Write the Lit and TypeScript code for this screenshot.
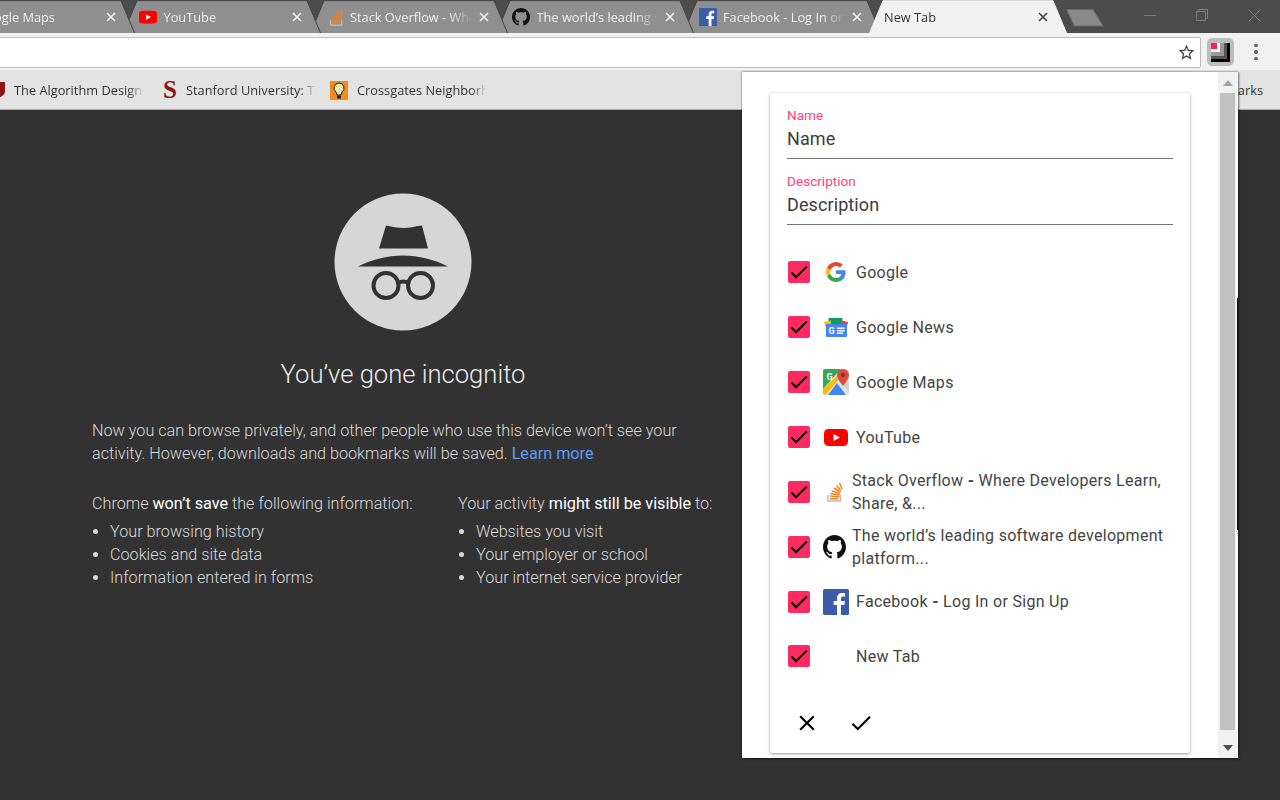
import { LitElement, html, css, svg } from "lit";
import { customElement } from "lit/decorators.js";

const icons: Record<string, any> = {
  google: svg`<svg viewBox="0 0 24 24" width="24" height="24"><path fill="#4285F4" d="M21.600 12.200c0-.7-.1-1.400-.2-2H12v3.900h5.400a4.600 4.600 0 0 1-2 3v2.500h3.200c1.900-1.700 3-4.300 3-7.400z"/><path fill="#34A853" d="M12 22c2.700 0 5-.9 6.600-2.400l-3.200-2.500c-.9.600-2 1-3.400 1-2.600 0-4.800-1.800-5.600-4.100H3.100v2.600A10 10 0 0 0 12 22z"/><path fill="#FBBC05" d="M6.400 14c-.2-.6-.3-1.300-.3-2s.1-1.400.3-2V7.400H3.100a10 10 0 0 0 0 9.200z"/><path fill="#EA4335" d="M12 6c1.500 0 2.800.5 3.800 1.500l2.900-2.900A10 10 0 0 0 3.100 7.400L6.400 10C7.200 7.700 9.400 6 12 6z"/></svg>`,
  news: svg`<svg viewBox="0 0 24 19" width="24" height="19"><path fill="#0c9d58" d="M4.500 0h14v7h-14z"/><path fill="#ea4335" d="M17 2.500L24 4l-1.500 7L17 8z"/><path fill="#fbbc05" d="M7 2.500L0 4l2 7 5-3z"/><rect x="2" y="6" width="21" height="13" rx="1" fill="#4285f4"/><text x="4.500" y="16" font-family="Roboto, sans-serif" font-size="9" font-weight="700" fill="#fff">G</text><path fill="#fff" d="M13 9.500h7.500v1.400H13zM13 12h7.500v1.400H13zM13 14.500h6v1.400h-6z"/></svg>`,
  maps: svg`<svg viewBox="0 0 26 26" width="26" height="26"><rect width="26" height="26" rx="2" fill="#e4e4e4"/><path fill="#35a85a" d="M0 2a2 2 0 0 1 2-2h16L0 20z"/><path fill="#fbbc05" d="M0 20L14.500 6.500l2 3L2.500 26H2a2 2 0 0 1-2-2z"/><path fill="#4285f4" d="M5 26l9-12 9 12z"/><path fill="#cfcfcf" d="M16 11l10 12v-9l-8-6z"/><path fill="#db4a3c" d="M20 0a6 6 0 0 0-6 6c0 4 6 11 6 11s6-7 6-11a6 6 0 0 0-6-6z"/><circle cx="20" cy="6" r="2.200" fill="#8c2f26"/><text x="3.500" y="10.500" font-family="Roboto, sans-serif" font-size="9" font-weight="700" fill="#fff">G</text></svg>`,
  youtube: svg`<svg viewBox="0 0 24 17" width="24" height="17"><rect width="24" height="17" rx="4.500" fill="#f00"/><path fill="#fff" d="M9.500 5l6.500 3.500-6.500 3.500z"/></svg>`,
  stack: svg`<svg viewBox="-4 0 20 20" width="20" height="20"><path fill="none" stroke="#bcbbbb" stroke-width="1.400" d="M1 13v6h12.500v-6"/><g stroke="#f48024" stroke-width="1.500"><path d="M3 16.700h8.500"/><path d="M3 14l9.500.8"/><path d="M3.500 11.500l9 1.500"/><path d="M5 9l8 2.500"/><path d="M7 6l6.500 4"/><path d="M9.500 3.500l4.500 5"/><path d="M12.500 1l2.500 6"/></g></svg>`,
  github: svg`<svg viewBox="0 0 16 16" width="23" height="24" preserveAspectRatio="none"><path fill="#111" d="M8 0C3.580 0 0 3.580 0 8c0 3.540 2.290 6.530 5.470 7.590.4.070.55-.17.55-.38 0-.19-.01-.82-.01-1.490-2.010.37-2.530-.49-2.690-.94-.09-.23-.48-.94-.82-1.130-.28-.15-.68-.52-.01-.53.630-.01 1.080.580 1.230.820.720 1.210 1.870.870 2.330.660.070-.520.280-.870.510-1.070-1.780-.200-3.640-.890-3.640-3.950 0-.870.310-1.590.820-2.150-.080-.200-.360-1.020.080-2.120 0 0 .670-.210 2.200.820.640-.180 1.320-.270 2-.270s1.360.090 2 .270c1.530-1.040 2.200-.820 2.200-.820.440 1.100.160 1.920.080 2.120.510.560.820 1.270.820 2.150 0 3.070-1.870 3.750-3.650 3.950.290.250.540.730.540 1.480 0 1.070-.010 1.930-.010 2.200 0 .210.150.460.550.380A8.010 8.010 0 0 0 16 8c0-4.420-3.580-8-8-8z"/></svg>`,
  facebook: svg`<svg viewBox="0 0 26 26" width="26" height="26"><rect width="26" height="26" rx="1.500" fill="#3b5ca8"/><path fill="#fff" d="M18 26V16h3.400l.5-4H18V9.500c0-1.100.4-1.900 2-1.900h2V4.200c-.4 0-1.600-.2-3-.2-3 0-5 1.800-5 5.100V12h-3.400v4H14v10z"/></svg>`,
};

const tabs = [
  { title: "Google Maps", icon: "maps", active: false },
  { title: "YouTube", icon: "youtube", active: false },
  { title: "Stack Overflow - Where Developers", icon: "stack", active: false },
  { title: "The world’s leading software", icon: "github", active: false },
  { title: "Facebook - Log In or Sign Up", icon: "facebook", active: false },
  { title: "New Tab", icon: "", active: true },
];

const items = [
  { title: "Google", icon: "google", wrap: false },
  { title: "Google News", icon: "news", wrap: false },
  { title: "Google Maps", icon: "maps", wrap: false },
  { title: "YouTube", icon: "youtube", wrap: false },
  { title: "Stack Overflow - Where Developers Learn, Share, &...", icon: "stack", wrap: true },
  { title: "The world’s leading software development platform...", icon: "github", wrap: true },
  { title: "Facebook - Log In or Sign Up", icon: "facebook", wrap: false },
  { title: "New Tab", icon: "", wrap: false },
];

@customElement("app-root")
export class AppRoot extends LitElement {
  static styles = css`
    :host { display: block; width: 1280px; height: 800px; overflow: hidden; position: relative; background: #323232; font-family: Roboto, sans-serif; }
    .strip { height: 33px; background: #4c4c4c; display: flex; align-items: stretch; overflow: hidden; position: relative; }
    .tabs { display: flex; margin-left: -63.500px; flex: none; }
    .tab { position: relative; flex: none; width: 198px; height: 33px; margin-right: -11.500px; display: flex; align-items: center; box-sizing: border-box; padding: 0 18px 0 16px; font-family: "Open Sans", sans-serif; font-size: 12.800px; color: #f0f0f0; }
    .tab.active { color: #333; padding-left: 15px; }
    .tab-bg { position: absolute; inset: 0; width: 198px; height: 33px; }
    .tab-ico { position: relative; width: 18px; height: 18px; margin-right: 6.500px; display: flex; align-items: center; justify-content: center; flex: none; }
    .tab-ico svg { width: 18px; height: 18px; display: block; }
    .tab-title { position: relative; flex: 1; white-space: nowrap; overflow: hidden; -webkit-mask-image: linear-gradient(to left, transparent 0, #000 22px); mask-image: linear-gradient(to left, transparent 0, #000 22px); }
    .tab-x { position: relative; width: 12px; height: 12px; margin-left: 6px; flex: none; color: #f3f3f3; }
    .tab.active .tab-x { color: #444; }
    .tab-x svg { display: block; }
    .newtab { flex: none; margin: 9px 0 0 10.500px; width: 38px; height: 18px; position: relative; }
    .win { margin-left: auto; display: flex; align-items: center; height: 30px; color: #7c7c7c; }
    .win span { display: flex; justify-content: center; }
    .win .min { width: 51px; }
    .win .max { width: 53px; }
    .win .cls { width: 52px; }
    .toolbar { height: 37px; background: #f2f2f2; display: flex; align-items: center; box-sizing: border-box; padding-top: 1px; }
    .omni { height: 31px; width: 1201px; flex: none; background: #fff; border: 1px solid #bdbdbd; border-left: none; box-sizing: border-box; display: flex; align-items: center; justify-content: flex-end; padding-right: 4px; border-radius: 0 2px 2px 0; }
    .ext { margin-left: 6px; width: 27px; height: 28px; border-radius: 5px; background: #bdbdbd; display: flex; align-items: center; justify-content: center; flex: none; }
    .dots { margin-left: 20px; display: flex; flex-direction: column; gap: 3px; }
    .dots i { width: 3.500px; height: 3.500px; border-radius: 50%; background: #666; display: block; }
    .bookmarks { height: 40px; padding-top: 1px; background: #e3e3e3; border-bottom: 1px solid #a9a9a9; box-sizing: border-box; display: flex; align-items: center; font-family: "Open Sans", sans-serif; font-size: 12.800px; color: #333; }
    .bm { display: flex; align-items: center; flex: none; }
    .bm span { white-space: nowrap; overflow: hidden; width: 130px; -webkit-mask-image: linear-gradient(to left, transparent 0, #000 16px); mask-image: linear-gradient(to left, transparent 0, #000 16px); }
    .bm svg { display: block; flex: none; }
    .bm0 { width: 14px; margin-left: -9px; }
    .bm1 { margin-left: 9px; }
    .bm2 { margin-left: 17px; }
    .bm2 span { margin-left: 7px; }
    .bm3 { margin-left: 14px; }
    .bm3 span { margin-left: 9px; }
    .other { margin-left: auto; margin-right: 17px; }
    .bm.other span { width: auto; overflow: visible; -webkit-mask-image: none; mask-image: none; }
    .page { height: 690px; background: #323232; padding: 83px 0 0 92px; box-sizing: border-box; color: #dadada; font-size: 16.200px; font-weight: 300; line-height: 23px; }
    .inner { width: 622px; }
    .hat { display: block; margin: 0 auto 0 242px; }
    h1 { margin: 27px 0 0; font-size: 25.600px; font-weight: 300; text-align: center; color: #ececec; line-height: 32px; }
    .lead { margin: 29px 0 0; width: 622px; }
    a { color: #5d9cf5; text-decoration: none; font-weight: 400; }
    strong { color: #fff; font-weight: 400; }
    .cols { display: grid; grid-template-columns: 366px 1fr; margin-top: 27px; white-space: nowrap; }
    .cols p { margin: 0; }
    ul { margin: 5px 0 0; padding-left: 18px; }
    .popup { position: absolute; left: 742px; top: 72px; width: 496px; height: 686px; background: #fff; box-shadow: 0 0 2px rgba(0,0,0,.55), 1px 1px 2px rgba(0,0,0,.4); box-sizing: border-box; display: flex; z-index: 5; }
    .scroll-area { flex: 1; padding: 21px 28px 0 28px; box-sizing: border-box; }
    .card { background: #fff; height: 660px; box-shadow: 0 1px 3px rgba(0,0,0,.4), 0 0 2px rgba(0,0,0,.08); border-radius: 2px; padding: 15px 17px 0 17px; box-sizing: border-box; }
    .field { height: 66px; box-sizing: border-box; }
    .label { color: #ff4081; font-size: 13.600px; line-height: 14px; }
    .input { color: #3c3c3c; font-size: 18px; line-height: 24px; height: 37px; box-sizing: border-box; padding-top: 5px; border-bottom: 1px solid #757575; letter-spacing: .1px; }
    .list { margin-top: 5px; }
    .row { height: 54.860px; display: flex; align-items: center; padding-left: 1px; color: #444; font-size: 16px; line-height: 23px; letter-spacing: .3px; }
    .hy { font-weight: 700; }
    .cb { flex: none; width: 22px; height: 22px; border-radius: 2px; background: #ff2a5f; display: flex; align-items: center; justify-content: center; }
    .cb svg { display: block; }
    .ico { flex: none; width: 26px; margin: 0 7px 0 13px; display: flex; align-items: center; justify-content: center; }
    .ico.narrow { margin-right: 3px; justify-content: flex-start; }
    .ico svg { display: block; }
    .actions { display: flex; gap: 28px; margin-top: 26px; padding-left: 7px; align-items: center; }
    .actions svg { display: block; }
    .bar { flex: none; width: 19px; margin-right: 1px; display: flex; flex-direction: column; background: #f1f1f1; }
    .btn { height: 21px; display: flex; align-items: center; justify-content: center; flex: none; }
    .thumb { height: 637px; margin: 0 2px; background: #c1c1c1; flex: none; }
    .fill { flex: 1; }
    .edge { position: absolute; right: 0; top: 226px; width: 1px; height: 232px; background: #111; }
  `;

  private tabBg(active: boolean) {
    const fill = active ? "#f2f2f2" : "#8f8f8f";
    const stroke = active ? "#f2f2f2" : "#454545";
    return svg`<svg class="tab-bg" viewBox="0 0 198 33"><path d="M0.500 33L14 0.700H184L197.500 33" fill="${fill}" stroke="${stroke}" stroke-width="1"/></svg>`;
  }

  private title(t: string) {
    const parts = t.split(" - ");
    if (parts.length < 2) return t;
    return html`${parts[0]} <span class="hy">-</span> ${parts[1]}`;
  }

  render() {
    const x = svg`<svg viewBox="0 0 12 12" width="12" height="12"><path d="M2 2l8 8M10 2l-8 8" stroke="currentColor" stroke-width="1.600"/></svg>`;
    const check = svg`<svg viewBox="0 0 22 22" width="22" height="22"><path d="M3.500 11.500L8 16.300 18.800 5.500" fill="none" stroke="#000" stroke-width="2"/></svg>`;
    return html`
      <div class="strip">
        <div class="tabs">
          ${tabs.map((t, i) => html`
            <div class="tab ${t.active ? "active" : ""}" style="z-index:${t.active ? 10 : 9 - i}">
              ${this.tabBg(t.active)}
              ${t.icon ? html`<span class="tab-ico">${icons[t.icon]}</span>` : ""}
              <span class="tab-title">${t.title}</span>
              <span class="tab-x">${x}</span>
            </div>`)}
        </div>
        <svg class="newtab" viewBox="0 0 38 18"><path d="M.5.5H27L37 17H8.500z" fill="#8a8a8a" stroke="#6a6a6a"/></svg>
        <div class="win">
          <span class="min"><svg width="12" height="12" viewBox="0 0 12 12"><path d="M0 6.500h12" stroke="currentColor"/></svg></span>
          <span class="max"><svg width="12" height="12" viewBox="0 0 12 12"><path d="M.5 2.500h9v9h-9zM2.500 2.500v-2h9v9h-2" fill="none" stroke="currentColor"/></svg></span>
          <span class="cls"><svg width="13" height="13" viewBox="0 0 13 13"><path d="M.5.500l12 12M12.500.500l-12 12" stroke="currentColor"/></svg></span>
        </div>
      </div>
      <div class="toolbar">
        <div class="omni">
          <svg width="19" height="19" viewBox="0 0 24 24"><path fill="#444" d="M22 9.240l-7.190-.62L12 2 9.190 8.630 2 9.240l5.460 4.730L5.820 21 12 17.270 18.180 21l-1.630-7.030L22 9.240zM12 15.400l-3.760 2.270 1-4.280-3.320-2.880 4.380-.38L12 6.100l1.710 4.040 4.380.38-3.320 2.880 1 4.280L12 15.400z"/></svg>
        </div>
        <div class="ext">
          <svg width="19" height="19" viewBox="0 0 19 19"><rect width="19" height="19" fill="#000"/><rect width="16" height="16" fill="#555"/><rect width="13" height="13" fill="#999"/><rect width="9" height="9" fill="#fff"/><rect width="6" height="6" fill="#ff1a5e"/></svg>
        </div>
        <div class="dots"><i></i><i></i><i></i></div>
      </div>
      <div class="bookmarks">
        <div class="bm bm0"><svg width="14" height="16" viewBox="0 0 14 16"><path d="M0 0h14v9c0 4-4 6-7 7-3-1-7-3-7-7z" fill="#8c1515"/></svg></div>
        <div class="bm bm1"><span>The Algorithm Design Manual</span></div>
        <div class="bm bm2"><svg width="18" height="22" viewBox="0 0 18 22"><text x="9" y="19" text-anchor="middle" font-family="Liberation Serif, serif" font-size="25" font-weight="700" fill="#8c1515">S</text></svg><span>Stanford University: The Best</span></div>
        <div class="bm bm3"><svg width="18" height="19" viewBox="0 0 18 19"><rect width="18" height="19" fill="#f58a1f"/><path d="M9 2a5 5 0 0 0-3 9l1 3h4l1-3a5 5 0 0 0-3-9z" fill="#e8ecb0" stroke="#222"/><path d="M7 14.500h4v3H7z" fill="#222"/></svg><span>Crossgates Neighborhood</span></div>
        <div class="bm other"><span>arks</span></div>
      </div>
      <div class="page">
        <div class="inner">
          <svg class="hat" width="138" height="138" viewBox="0 0 138 138">
            <circle cx="69" cy="69" r="68.500" fill="#d6d6d6"/>
            <path fill="#323232" d="M52 32.500c7 1.500 11.500 2.500 17.500 2.500s11-1.500 18.500-2.500l6 23H45z"/>
            <path fill="#323232" d="M24 73.500c14-7 29-11 45-11s31 4 45 11z"/>
            <g fill="none" stroke="#323232" stroke-width="4"><circle cx="52" cy="92.500" r="12.500"/><circle cx="86.500" cy="92.500" r="12.500"/><path d="M64 90c3.500-2 7-2 10.500 0"/></g>
          </svg>
          <h1>You’ve gone incognito</h1>
          <p class="lead">Now you can browse privately, and other people who use this device won’t see your activity. However, downloads and bookmarks will be saved. <a>Learn more</a></p>
          <div class="cols">
            <div><p>Chrome <strong>won’t save</strong> the following information:</p>
              <ul><li>Your browsing history</li><li>Cookies and site data</li><li>Information entered in forms</li></ul></div>
            <div><p>Your activity <strong>might still be visible</strong> to:</p>
              <ul><li>Websites you visit</li><li>Your employer or school</li><li>Your internet service provider</li></ul></div>
          </div>
        </div>
      </div>
      <div class="popup">
        <div class="scroll-area">
          <div class="card">
            <div class="field"><div class="label">Name</div><div class="input">Name</div></div>
            <div class="field"><div class="label">Description</div><div class="input">Description</div></div>
            <div class="list">
              ${items.map((it) => html`
                <div class="row">
                  <div class="cb">${check}</div>
                  <div class="ico ${it.wrap ? "narrow" : ""}">${it.icon ? icons[it.icon] : ""}</div>
                  <div>${this.title(it.title)}</div>
                </div>`)}
            </div>
            <div class="actions">
              <svg width="26" height="26" viewBox="0 0 24 24"><path d="M19 6.410L17.590 5 12 10.590 6.410 5 5 6.410 10.590 12 5 17.590 6.410 19 12 13.410 17.590 19 19 17.590 13.410 12z"/></svg>
              <svg width="26" height="26" viewBox="0 0 24 24"><path d="M9 16.170L4.830 12l-1.420 1.410L9 19 21 7l-1.410-1.410z"/></svg>
            </div>
          </div>
        </div>
        <div class="bar">
          <div class="btn"><svg width="10" height="6" viewBox="0 0 10 6"><path d="M5 0l5 6H0z" fill="#a3a3a3"/></svg></div>
          <div class="thumb"></div>
          <div class="fill"></div>
          <div class="btn"><svg width="10" height="6" viewBox="0 0 10 6"><path d="M0 0h10L5 6z" fill="#505050"/></svg></div>
        </div>
        <div class="edge"></div>
      </div>
    `;
  }
}
